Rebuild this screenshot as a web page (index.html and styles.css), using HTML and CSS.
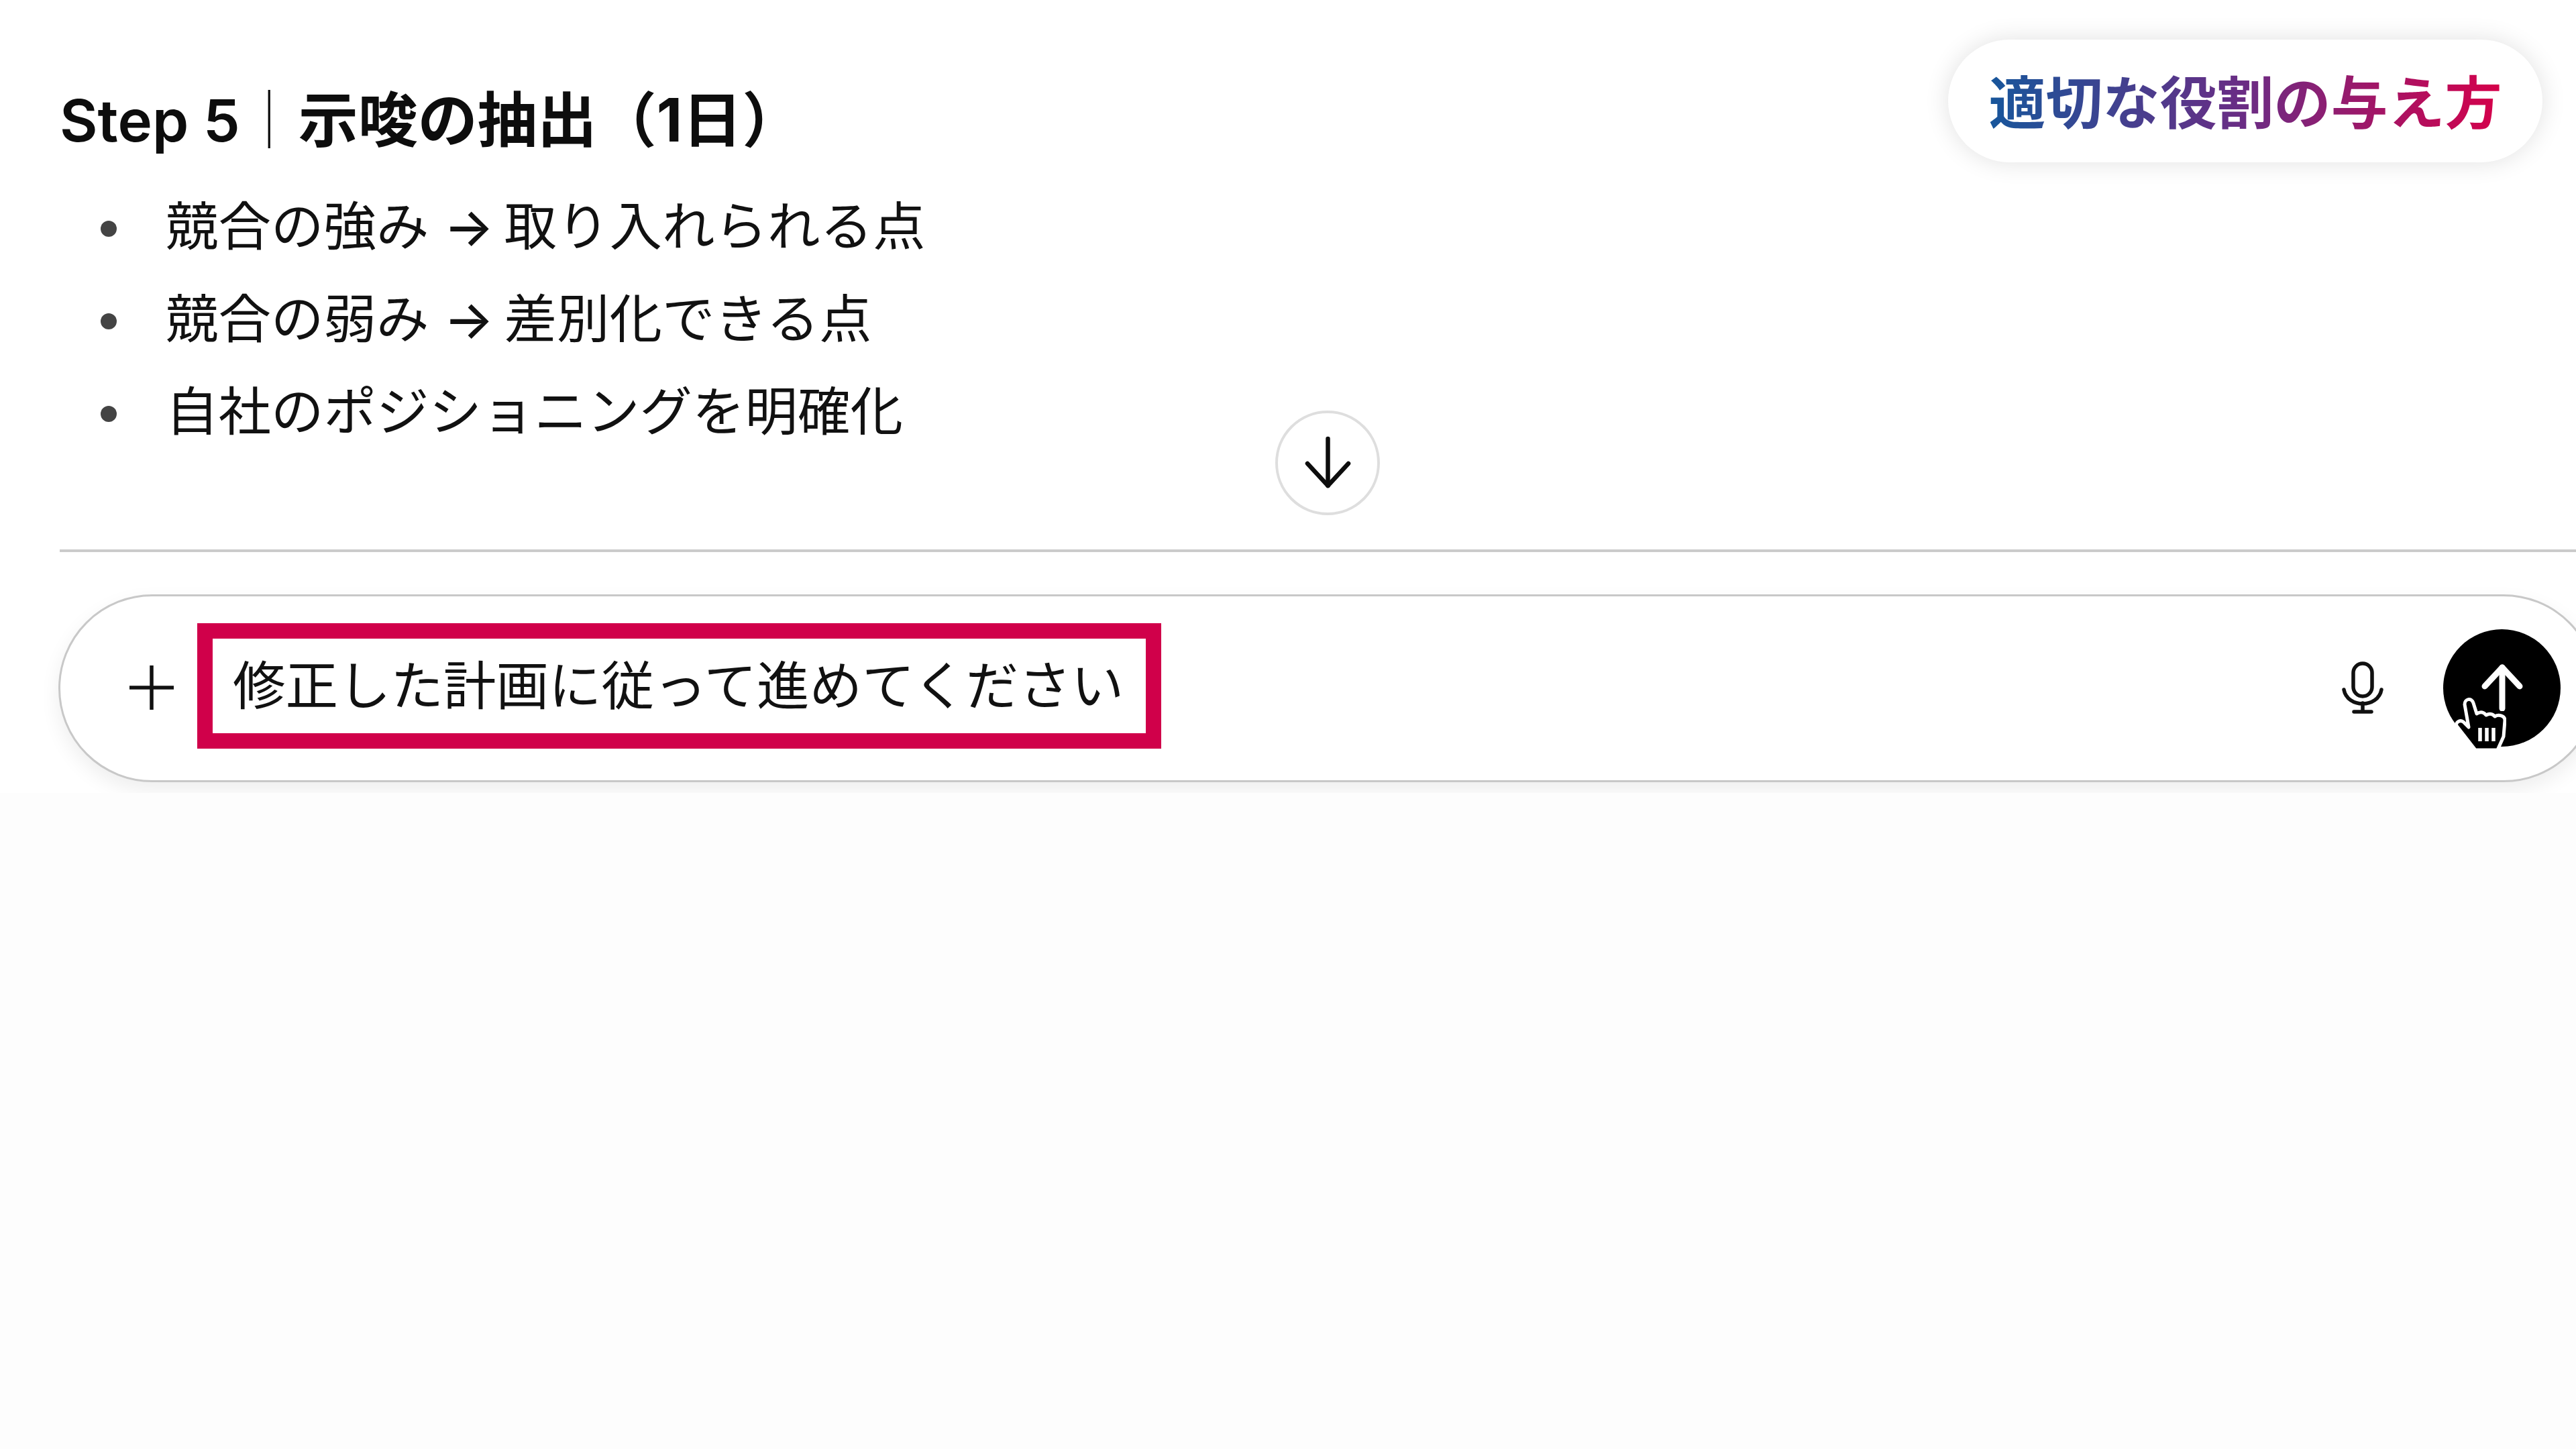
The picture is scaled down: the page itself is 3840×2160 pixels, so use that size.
FILE: index.html
```html
<!DOCTYPE html>
<html lang="ja">
<head>
    <title>適切な役割の与え方</title>
    <link rel="stylesheet" href="styles.css">
</head>
<body>
    <div class="chat">
        <h2 class="step-title"><span class="step-label">Step 5</span><span class="step-sep">｜</span>示唆の抽出（1日）</h2>
        <ul class="points">
            <li><span>競合の強み <span class="arrow">→</span> 取り入れられる点</span></li>
            <li><span>競合の弱み <span class="arrow">→</span> 差別化できる点</span></li>
            <li><span>自社のポジショニングを明確化</span></li>
        </ul>
        <button class="scroll-down" type="button">
            <svg width="75" height="84" viewBox="0 0 75 84" fill="none" stroke="#0d0d0d" stroke-width="6.500" stroke-linecap="round" stroke-linejoin="round">
                <path d="M37.500 6V76"/>
                <path d="M7 43L37.500 76L68 43"/>
            </svg>
        </button>
        <hr class="divider">
        <div class="composer">
            <svg class="plus" width="70" height="70" viewBox="0 0 70 70" stroke="#111" stroke-width="5.500">
                <path d="M35 2V68M2 35H68"/>
            </svg>
            <div class="highlight">修正した計画に従って進めてください</div>
            <svg class="mic" width="62" height="78" viewBox="0 0 62 78" fill="none" stroke="#111" stroke-width="5.500" stroke-linecap="round">
                <rect x="17" y="3" width="28" height="49" rx="14"/>
                <path d="M3 42C8 70 54 70 59 42"/>
                <path d="M31 62V75M18 75H44"/>
            </svg>
            <button class="send" type="button">
                <svg width="62" height="70" viewBox="0 0 62 70" fill="none" stroke="#fff" stroke-width="9" stroke-linecap="round" stroke-linejoin="round">
                    <path d="M31 5V66"/>
                    <path d="M5 33L31 5L57 33"/>
                </svg>
            </button>
            <svg class="cursor" width="78" height="84" viewBox="-2 -2 78 84">
                <path d="M14 10C14 2 24 -1 27 8L32 24C38 20 43 22 46 26C51 23 56 24 59 28C64 25 74 26 74 34L72 58L63 78L30 78L2 42C0 38 6 32 12 36L20 44Z" fill="#000" stroke="#fff" stroke-width="5" stroke-linejoin="round"/>
                <path d="M37 45V65M47 45V65M57 45V65" stroke="#fff" stroke-width="5.500"/>
            </svg>
        </div>
        <div class="role-badge"><span class="role-text">適切な役割の与え方</span></div>
    </div>
</body>
</html>
```

FILE: styles.css
```css
html, body {
    margin: 0;
    height: 100%;
    overflow: hidden;
    background-color: #fdfdfd;
}
body {
    font-family: Inter, "Noto Sans CJK JP", sans-serif;
    color: #111;
}
.chat {
    position: relative;
    height: 1182px;
    padding-top: 129px;
    box-sizing: border-box;
    overflow: hidden;
    background-color: #fff;
}
.step-title {
    margin: 0 0 37px 89px;
    font-size: 89px;
    line-height: 100px;
    font-weight: 700;
    color: #0d0d0d;
}
.step-label {
    font-size: 87px;
    font-weight: 600;
}
.step-sep {
    font-size: 87px;
    font-weight: 300;
}
.points {
    list-style: none;
    margin: 0 0 138px 89px;
    padding: 0;
}
.points li {
    display: flex;
    align-items: center;
    box-sizing: border-box;
    height: 138px;
    padding-bottom: 9px;
    font-size: 78.5px;
}
.points li::before {
    content: "";
    width: 24px;
    height: 24px;
    margin: 19px 73px 0 61px;
    border-radius: 50%;
    background-color: #444;
}
.arrow {
    margin-right: -7px;
    font-weight: 500;
}
.scroll-down {
    position: absolute;
    left: 1901px;
    top: 612px;
    display: flex;
    align-items: center;
    justify-content: center;
    width: 156px;
    height: 156px;
    padding: 0;
    border: 4px solid #dedede;
    border-radius: 50%;
    background-color: #fff;
}
.divider {
    height: 4px;
    margin: 0 0 63px 89px;
    border: none;
    background-color: #cbcbcb;
}
.composer {
    position: relative;
    display: flex;
    align-items: center;
    box-sizing: border-box;
    width: 3785px;
    height: 280px;
    margin-left: 87px;
    padding: 0 52px 2px 101px;
    border: 3px solid #c8c8c8;
    border-radius: 140px;
    background-color: #fff;
    box-shadow: 0 12px 30px rgba(0, 0, 0, 0.07);
}
.highlight {
    box-sizing: border-box;
    width: 1437px;
    height: 187px;
    margin: 0 0 6px 33px;
    padding-left: 30px;
    border: 23px solid #d0004a;
    font-size: 78.5px;
    line-height: 141px;
    white-space: nowrap;
}
.mic {
    margin-left: auto;
    margin-right: 89px;
}
.send {
    display: flex;
    align-items: center;
    justify-content: center;
    width: 175px;
    height: 175px;
    padding: 0;
    border: none;
    border-radius: 50%;
    background-color: #000;
}
.cursor {
    position: absolute;
    left: 3568px;
    top: 149px;
}
.role-badge {
    position: absolute;
    left: 2904px;
    top: 59px;
    display: flex;
    align-items: center;
    justify-content: center;
    box-sizing: border-box;
    width: 886px;
    height: 183px;
    padding-top: 8px;
    border-radius: 92px;
    background-color: #fff;
    box-shadow: 0 0 36px rgba(0, 0, 0, 0.12);
}
.role-text {
    font-size: 85px;
    line-height: 100px;
    font-weight: 700;
    background: linear-gradient(90deg, #17569b 0%, #6b2c84 50%, #d6004a 100%);
    -webkit-background-clip: text;
    background-clip: text;
    color: transparent;
}
```
